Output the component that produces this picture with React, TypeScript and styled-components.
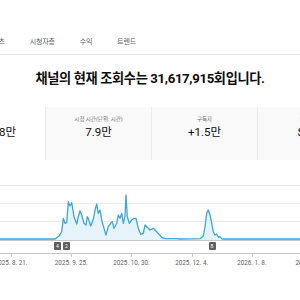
import styled, { createGlobalStyle } from "styled-components";

const GlobalStyle = createGlobalStyle`
  html, body {
    margin: 0;
    background: #fff;
  }
  body {
    font-family: Roboto, "Noto Sans CJK KR", sans-serif;
    color: #0d0d0d;
    overflow: hidden;
  }
`;

const tabs = ["콘텐츠", "시청자층", "수익", "트렌드"];

const stats = [
  { label: "조회수", value: "1,478.8만", selected: true },
  { label: "시청 시간(단위: 시간)", value: "7.9만" },
  { label: "구독자", value: "+1.5만" },
  { label: "예상 수익", value: "$920" },
];

const dates = ["2025. 8. 21.", "2025. 9. 25.", "2025. 10. 30.", "2025. 12. 4.", "2026. 1. 8.", "2026. 2. 12."];

const markers = [
  { label: "4", x: 54 },
  { label: "2", x: 63 },
  { label: "8", x: 208.5 },
];

// page coordinates (viewBox matches the page)
const points: [number, number][] = [
  [0, 239], [55, 239], [56.7, 237.7], [59.3, 235.7], [61.7, 231.7], [63.3, 218.3], [65, 223.3],
  [66.7, 222.7], [68.3, 201.7], [70, 206], [71.7, 202.7], [74, 216.7], [76.7, 224], [78.3, 216.7],
  [80, 210.7], [81.7, 215], [84, 223.3], [86, 225], [87.3, 216.7], [88.3, 218.3], [90.7, 226],
  [93.3, 219.3], [95, 210], [96.7, 204], [98.3, 213.3], [100, 210], [101.7, 220], [104, 228.3],
  [106, 235], [108.3, 226.7], [110.7, 223.3], [112.3, 221.7], [114, 228.3], [116.7, 223.3],
  [118.3, 215], [120, 218.3], [121.7, 213.3], [123.3, 223.3], [125, 216], [126, 195], [127.3, 216.7],
  [129.3, 223.3], [131.7, 220], [134, 218.3], [136, 218.3], [138.3, 228.3], [140.7, 234.3],
  [143.3, 233.3], [145, 225], [146.7, 226.7], [148.3, 228.3], [150, 230], [153.3, 228.3],
  [156.7, 231.7], [161.7, 237.3], [165, 238.7], [176.7, 238.7], [180, 239], [200, 238.7],
  [203.3, 236], [205, 226.7], [206.7, 213.3], [208.3, 210], [210, 215], [211.7, 223], [213.3, 231.7],
  [215, 235], [216.7, 234], [218.3, 237.3], [220, 236.7], [221.7, 238.7], [223, 239], [300, 239],
];

const linePath = points.map(([x, y], i) => `${i ? "L" : "M"}${x} ${y}`).join(" ");
const areaPath = `${linePath} L300 240 L0 240 Z`;

const Page = styled.div`
  width: 300px;
  overflow: hidden;
`;

const TabBar = styled.div`
  height: 55px;
  box-sizing: border-box;
  padding-top: 37px;
  border-bottom: 1px solid #e5e5e5;
`;

const TabList = styled.div`
  display: flex;
  gap: 25px;
  margin-left: -14px;
`;

const Tab = styled.div`
  font-size: 7px;
  line-height: 10px;
  color: #606060;
  letter-spacing: -0.2px;
  white-space: nowrap;
`;

const Title = styled.h1`
  margin: 16px 0 20px;
  font-size: 13.2px;
  line-height: 16px;
  font-weight: 700;
  letter-spacing: -0.35px;
  text-align: center;
  white-space: nowrap;
`;

const StatRow = styled.div`
  display: flex;
  margin-left: -61px;
`;

const StatCard = styled.div<{ $selected?: boolean }>`
  flex: 0 0 106px;
  height: 53px;
  box-sizing: border-box;
  padding-top: 9px;
  text-align: center;
  background: ${(p) => (p.$selected ? "#fff" : "#f9f9f9")};
  border-left: ${(p) => (p.$selected ? "none" : "1px solid #ececec")};
`;

const StatLabel = styled.div`
  font-size: 5.5px;
  line-height: 7px;
  color: #717171;
  white-space: nowrap;
`;

const StatValue = styled.div`
  margin-top: 2px;
  font-size: 11.5px;
  line-height: 14px;
  color: #0d0d0d;
  white-space: nowrap;
`;

const Chart = styled.div`
  margin-top: 25px;
`;

const Plot = styled.svg`
  display: block;
`;

const MarkerRow = styled.div`
  position: relative;
  height: 12px;
  border-bottom: 1px solid #c8c8c8;
`;

const Marker = styled.span`
  position: absolute;
  top: 1px;
  width: 7px;
  height: 8px;
  border-radius: 1px;
  background: #5f5f5f;
  color: #fff;
  font-size: 5px;
  line-height: 8px;
  text-align: center;
`;

const DateRow = styled.div`
  display: flex;
  margin-left: -19px;
`;

const DateLabel = styled.div`
  position: relative;
  flex: 0 0 60.2px;
  padding-top: 5px;
  font-size: 6.3px;
  line-height: 8px;
  color: #606060;
  text-align: center;
  white-space: nowrap;

  &::before {
    content: "";
    position: absolute;
    top: 0;
    left: 50%;
    width: 1px;
    height: 3px;
    background: #c8c8c8;
  }
`;

export default function App() {
  return (
    <Page>
      <GlobalStyle />
      <TabBar>
        <TabList>
          {tabs.map((t) => (
            <Tab key={t}>{t}</Tab>
          ))}
        </TabList>
      </TabBar>

      <Title>채널의 현재 조회수는 31,617,915회입니다.</Title>

      <StatRow>
        {stats.map((s) => (
          <StatCard key={s.label} $selected={s.selected}>
            <StatLabel>{s.label}</StatLabel>
            <StatValue>{s.value}</StatValue>
          </StatCard>
        ))}
      </StatRow>

      <Chart>
        <Plot width={300} height={56} viewBox="0 185 300 56">
          <line x1={0} x2={300} y1={185.5} y2={185.5} stroke="#ececec" />
          <line x1={0} x2={300} y1={203.5} y2={203.5} stroke="#ececec" />
          <line x1={0} x2={300} y1={221.5} y2={221.5} stroke="#ececec" />
          <path d={areaPath} fill="#e6f3fa" />
          <line x1={0} x2={300} y1={240.5} y2={240.5} stroke="#c8c8c8" />
          <path d={linePath} fill="none" stroke="#3ea6d8" strokeWidth={1.3} strokeLinejoin="round" />
        </Plot>
        <MarkerRow>
          {markers.map((m) => (
            <Marker key={m.label} style={{ left: m.x }}>
              {m.label}
            </Marker>
          ))}
        </MarkerRow>
        <DateRow>
          {dates.map((d) => (
            <DateLabel key={d}>{d}</DateLabel>
          ))}
        </DateRow>
      </Chart>
    </Page>
  );
}
